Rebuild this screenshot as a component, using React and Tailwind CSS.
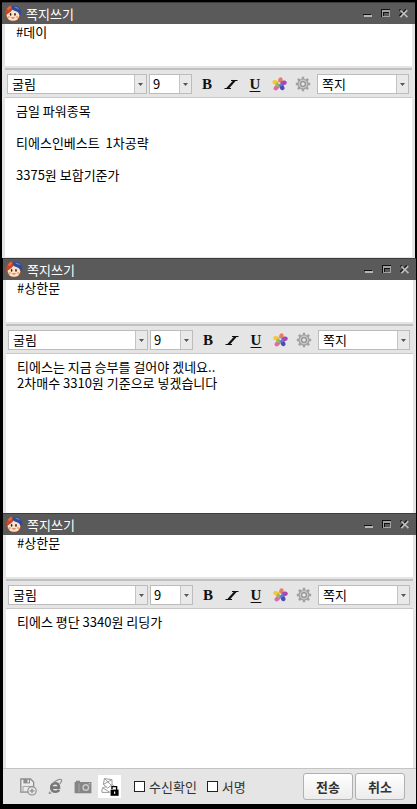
import React, { useState } from "react";

const FONT = "font-['Noto_Sans_CJK_KR',sans-serif]";

const FaceIcon = () => (
  <svg className="h-[17px] w-[17px] shrink-0" viewBox="0 0 17 17" aria-hidden="true">
    <circle cx="8" cy="9" r="7.6" fill="#a8562c" />
    <ellipse cx="8" cy="10.2" rx="6.2" ry="5.6" fill="#fbe3cb" />
    <path d="M0.6 10C-0.4 5 2 1.2 6.6 0.8L8.4 3.4C6.6 6.6 4 8 0.6 10Z" fill="#c2492a" />
    <path d="M2 3.6L5 0.6L6.4 2.6L3 5.4Z" fill="#e8693f" />
    <path d="M6.4 1.8C9.6 -0.8 15 1 16.2 6.4C16.6 8.4 16.2 9.6 15.4 11C14.4 8.4 12.6 6.4 9.4 5.8C8 5.2 6.8 4 6.4 1.8Z" fill="#2d4c9c" />
    <path d="M9 1.8C11.2 1.2 13.4 2.4 14.4 4.4C12.4 3.6 10.6 3.4 9 1.8Z" fill="#6f8fd6" />
    <ellipse cx="5.6" cy="9.4" rx="0.8" ry="1.3" fill="#3b1c12" />
    <ellipse cx="10" cy="9.4" rx="0.8" ry="1.3" fill="#3b1c12" />
    <circle cx="3.8" cy="12" r="1.1" fill="#f3a27e" />
    <circle cx="12" cy="12" r="1.1" fill="#f3a27e" />
    <path d="M5.6 12.4Q8 14.4 10.2 12.4Z" fill="#b04a30" />
  </svg>
);

const MinimizeIcon = () => (
  <svg className="h-[9px] w-[9px]" viewBox="0 0 9 9" shapeRendering="crispEdges" aria-hidden="true">
    <path d="M0 5H8V6H0Z" fill="#111" />
    <path d="M1 6H9V8H1Z" fill="#b5b5b5" />
  </svg>
);

const MaximizeIcon = () => (
  <svg className="h-[9px] w-[9px]" viewBox="0 0 9 9" shapeRendering="crispEdges" aria-hidden="true">
    <path d="M0 0H9V8H0Z" fill="#111" />
    <path d="M1 1H9V8H1ZM2 3V7H8V3Z" fill="#a2a2a2" fillRule="evenodd" />
    <path d="M2 3H8V4H2Z" fill="#111" />
    <path d="M3 4H8V7H3Z" fill="#5a5a5a" />
  </svg>
);

const CloseIcon = () => (
  <svg className="h-[9px] w-[9px]" viewBox="0 0 9 9" aria-hidden="true">
    <path d="M0.5 0.5L7 7M7 0.5L0.5 7" stroke="#111" strokeWidth="1.8" />
    <path d="M1.4 1.4L8.4 8.2M8.2 1.2L1.4 8.2" stroke="#bdbdbd" strokeWidth="1.7" />
  </svg>
);

const ItalicIcon = () => (
  <svg className="h-[11px] w-[14px]" viewBox="0 0 14 11" aria-hidden="true">
    <path d="M7 1.5H13.5M0.5 9.5H7" stroke="#111" />
    <path d="M10.6 1.5L3.4 9.5" stroke="#111" strokeWidth="2.2" />
  </svg>
);

const ColorIcon = () => (
  <svg className="h-[14px] w-[15px]" viewBox="0 0 15 14" aria-hidden="true">
    <ellipse cx="3.4" cy="5.4" rx="3.1" ry="2.3" fill="#f2c83a" transform="rotate(20 3.4 5.4)" />
    <ellipse cx="4.4" cy="10.6" rx="3.2" ry="2.2" fill="#e268ac" transform="rotate(-45 4.4 10.6)" />
    <ellipse cx="8.4" cy="3.2" rx="2.2" ry="3" fill="#ee7a60" transform="rotate(10 8.4 3.2)" />
    <ellipse cx="11.8" cy="5.8" rx="3" ry="2.3" fill="#a848b4" transform="rotate(-15 11.8 5.8)" />
    <ellipse cx="10" cy="10.4" rx="2.3" ry="3" fill="#474fb4" transform="rotate(-25 10 10.4)" />
    <circle cx="5.6" cy="7.6" r="2.2" fill="#8cc350" />
    <circle cx="8.6" cy="7.4" r="2" fill="#6878cc" />
    <circle cx="7.4" cy="6.2" r="1" fill="#d5e8e0" />
  </svg>
);

const GearIcon = () => (
  <svg className="h-[16px] w-[16px]" viewBox="0 0 16 16" fill="none" aria-hidden="true">
    <path
      d="M8 0.8V15.2M0.8 8H15.2M2.9 2.9L13.1 13.1M13.1 2.9L2.9 13.1"
      stroke="#a0a0a0"
      strokeWidth="2.4"
    />
    <circle cx="8" cy="8" r="5.6" fill="#a0a0a0" />
    <circle cx="8" cy="8" r="4.4" fill="#c8c8c8" />
    <circle cx="8" cy="8" r="2.4" fill="#e8e8e8" stroke="#8f8f8f" strokeWidth="1.2" />
  </svg>
);

const SaveIcon = () => (
  <svg className="h-[18px] w-[17px]" viewBox="0 0 17 18" fill="none" aria-hidden="true">
    <path d="M0.8 1H10.6L13.6 4V14.2H0.8Z" fill="#ececec" stroke="#8c8c8c" strokeWidth="1.3" />
    <path d="M3.4 1H10V5.4H3.4Z" fill="#8c8c8c" />
    <path d="M7.4 1.8H9V4.4H7.4Z" fill="#e5e5e5" />
    <path d="M3 8.4H10.8V14H3Z" stroke="#a3a3a3" />
    <circle cx="12" cy="12.8" r="4.2" fill="#e9e9e9" stroke="#8c8c8c" strokeWidth="1.1" />
    <path d="M12 10.4V15.2M9.6 12.8H14.4" stroke="#8c8c8c" strokeWidth="1.2" />
  </svg>
);

const ExplorerIcon = () => (
  <svg className="h-[17px] w-[15px]" viewBox="0 0 15 17" fill="none" aria-hidden="true">
    <path d="M3.6 9.6H11C11 6.6 9.6 5.2 7.4 5.2C5 5.2 3.2 7 3.2 9.6C3.2 12 5 13.8 7.4 13.8C9 13.8 10.4 13.2 11 11.8" stroke="#777" strokeWidth="2.6" />
    <path d="M2 13.6C0.6 15.2 1.2 16 3.4 14.8M5 5C8.6 1.8 13 0.4 13.6 1.8C14 2.8 13 4.4 11.8 6" stroke="#909090" strokeWidth="1.2" />
  </svg>
);

const CameraIcon = () => (
  <svg className="h-[14px] w-[18px]" viewBox="0 0 18 14" fill="none" aria-hidden="true">
    <path d="M2 0.8H6V2H17.4V13.2H0.6V2H2Z" fill="#858585" />
    <path d="M5 3.4V12" stroke="#a8a8a8" />
    <circle cx="11.8" cy="7.4" r="3.5" fill="#c9c9c9" />
    <circle cx="11.8" cy="7.4" r="2" fill="#858585" />
    <path d="M14.8 3.8H16.2" stroke="#ddd" />
  </svg>
);

const LockIcon = () => (
  <svg className="h-[23px] w-[23px]" viewBox="0 0 23 23" fill="none" aria-hidden="true">
    <path d="M6.4 3.6L14 4.6V10L9.6 13L5.4 9.4ZM6.4 3.6L13.6 10.6M14 4.6L5.4 9.4" stroke="#9a9a9a" />
    <path d="M8.6 12C5 11.4 3.4 14 4 17.4H11.4M4.4 12.6L12 17.4M14 9.6L16.4 11.2" stroke="#9a9a9a" />
    <path d="M14 14V11.6H18.6V15" stroke="#000" strokeWidth="1.4" />
    <path d="M12.6 14.6H20.6V20.8H12.6Z" fill="#000" />
    <path d="M16 16.4H17.2V18.8H16Z" fill="#fff" />
  </svg>
);

const SelectBox = ({ label, options, className, padding }) => (
  <div className={`relative h-5 ${className}`}>
    <select
      aria-label={label}
      className={`block h-full w-full appearance-none rounded-none border border-[#bcbcbc] bg-white pr-4 text-[13px] leading-4 text-black outline-none ${padding}`}
    >
      {options.map((option) => (
        <option key={option}>{option}</option>
      ))}
    </select>
    <span className="pointer-events-none absolute inset-y-px right-px flex w-3 items-center justify-center border-l border-[#c4c4c4] bg-[#e9e9e9]">
      <svg className="h-[3px] w-[5px]" viewBox="0 0 5 3" aria-hidden="true">
        <path d="M0 0H5L2.5 3Z" fill="#555" />
      </svg>
    </span>
  </div>
);

const TitleBar = () => (
  <div className="flex h-[22px] items-center justify-between border-t border-[#3c3c3c] bg-[#5a5a5a] pl-[3px] pr-[7px]">
    <div className="flex items-center gap-1">
      <FaceIcon />
      <h2 className="text-[13px] leading-4 text-white">쪽지쓰기</h2>
    </div>
    <div className="flex items-center gap-[9px]">
      <button type="button" aria-label="최소화"><MinimizeIcon /></button>
      <button type="button" aria-label="최대화"><MaximizeIcon /></button>
      <button type="button" aria-label="닫기"><CloseIcon /></button>
    </div>
  </div>
);

const Toolbar = () => (
  <div className="flex h-[27px] items-center pt-px pl-[5px] pr-[6px]">
    <SelectBox label="글꼴" options={["굴림", "돋움", "바탕"]} className="w-[140px] shrink-0" padding="pl-1" />
    <SelectBox label="글자 크기" options={["9", "10", "11", "12"]} className="ml-[2px] w-[43px] shrink-0" padding="pl-[3px]" />
    <div className="mr-[2px] ml-[3px] flex shrink-0 items-center font-['Liberation_Serif',serif] text-[15px] leading-4 font-bold text-[#111]">
      <button type="button" aria-label="굵게" className="flex w-6 justify-center">B</button>
      <button type="button" aria-label="기울임" className="flex w-6 items-center justify-center"><ItalicIcon /></button>
      <button type="button" aria-label="밑줄" className="flex w-6 justify-center underline underline-offset-2">U</button>
      <button type="button" aria-label="글자 색" className="flex w-6 justify-center"><ColorIcon /></button>
      <button type="button" aria-label="설정" className="flex w-6 justify-center"><GearIcon /></button>
    </div>
    <SelectBox label="종류" options={["쪽지", "메일"]} className="min-w-0 flex-1" padding="pl-1" />
  </div>
);

const Footer = () => (
  <div className="flex h-9 items-center justify-between border-t border-[#c4c4c4] pl-[17px] pr-[11px]">
    <div className="flex items-center">
      <div className="flex items-center gap-[11px]">
        <button type="button" aria-label="저장"><SaveIcon /></button>
        <button type="button" aria-label="웹"><ExplorerIcon /></button>
        <button type="button" aria-label="캡처"><CameraIcon /></button>
      </div>
      <button type="button" aria-label="잠금" className="ml-[6px] bg-white"><LockIcon /></button>
      <div className="ml-[13px] flex items-center gap-[10px] text-[13px] leading-4 text-[#333]">
        <label className="flex items-center gap-1">
          <input type="checkbox" className="h-[11px] w-[11px] appearance-none border border-[#222] bg-white checked:bg-[#555]" />
          수신확인
        </label>
        <label className="flex items-center gap-1">
          <input type="checkbox" className="h-[11px] w-[11px] appearance-none border border-[#222] bg-white checked:bg-[#555]" />
          서명
        </label>
      </div>
    </div>
    <div className="flex gap-[2px] text-[13px] leading-4 font-bold text-[#333]">
      {["전송", "취소"].map((text) => (
        <button
          key={text}
          type="button"
          className="h-[27px] w-[50px] rounded-[3px] border border-[#b0b0b0] bg-linear-to-b from-white to-[#ececec]"
        >
          {text}
        </button>
      ))}
    </div>
  </div>
);

const MessageWindow = ({ tag, message, className, hasFooter }) => {
  const [subject, setSubject] = useState(tag);
  const [body, setBody] = useState(message);

  return (
    <section className={`bg-[#e5e5e5] ${className}`}>
      <TitleBar />
      <div className="px-[3px]">
        <textarea
          aria-label="받는 사람"
          value={subject}
          onChange={(e) => setSubject(e.target.value)}
          className="block h-[42px] w-full resize-none overflow-hidden bg-white px-[11px] text-[13px] leading-4 text-black outline-none"
        />
      </div>
      <div className="mx-[3px] mt-[2px] h-[2px] bg-[#c0c0c0]" />
      <Toolbar />
      <div className="px-[3px]">
        <textarea
          aria-label="내용"
          value={body}
          onChange={(e) => setBody(e.target.value)}
          className="block h-40 w-full resize-none overflow-hidden border-t border-[#c8c8c8] bg-white px-[11px] pt-[5px] text-[13px] leading-4 text-black outline-none"
        />
      </div>
      {hasFooter && <Footer />}
    </section>
  );
};

const App = () => {
  return (
    <main className={`min-h-screen bg-black pt-[2px] pb-1 ${FONT}`}>
      <MessageWindow
        tag="#데이"
        message={"금일 파워종목\n\n티에스인베스트  1차공략\n\n3375원 보합기준가"}
        className="mx-[2px] pb-px"
      />
      <MessageWindow
        tag="#상한문"
        message={"티에스는 지금 승부를 걸어야 겠네요..\n2차매수 3310원 기준으로 넣겠습니다"}
        className="ml-[3px] mr-px"
      />
      <MessageWindow
        tag="#상한문"
        message="티에스 평단 3340원 리딩가"
        className="ml-[3px] mr-px"
        hasFooter
      />
    </main>
  );
};

export default App;
